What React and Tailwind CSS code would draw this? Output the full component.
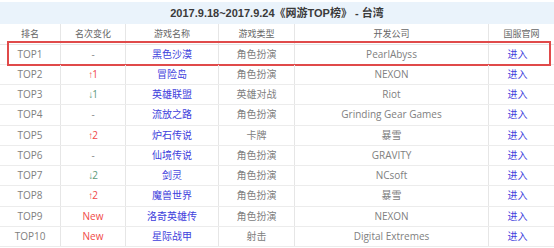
import React from "react";

const rows = [
  ["TOP1", "-", "黑色沙漠", "角色扮演", "PearlAbyss", "none"],
  ["TOP2", "↑1", "冒险岛", "角色扮演", "NEXON", "up"],
  ["TOP3", "↓1", "英雄联盟", "英雄对战", "Riot", "down"],
  ["TOP4", "-", "流放之路", "角色扮演", "Grinding Gear Games", "none"],
  ["TOP5", "↑2", "炉石传说", "卡牌", "暴雪", "up"],
  ["TOP6", "-", "仙境传说", "角色扮演", "GRAVITY", "none"],
  ["TOP7", "↓2", "剑灵", "角色扮演", "NCsoft", "down"],
  ["TOP8", "↑2", "魔兽世界", "角色扮演", "暴雪", "up"],
  ["TOP9", "New", "洛奇英雄传", "角色扮演", "NEXON", "new"],
  ["TOP10", "New", "星际战甲", "射击", "Digital Extremes", "new"],
];

const grid = "grid grid-cols-[61px_65px_93px_76px_194px_1fr]";
const font = { fontFamily: '"Open Sans", "Noto Sans CJK SC", sans-serif' };

function changeClass(t) {
  if (t === "up" || t === "new") return "text-[#f04848]";
  if (t === "down") return "text-[#5c9a7a]";
  return "text-[#888]";
}

function Change({ text, type }) {
  if (type === "up" || type === "down") {
    return (
      <span className="flex items-center">
        <span className="font-['Liberation_Sans'] text-[10px] tracking-[-1px]">{text[0]}</span>
        <span>{text.slice(1)}</span>
      </span>
    );
  }
  return <span>{text}</span>;
}

export default function App() {
  return (
    <div className="w-[554px] h-[248px] bg-white overflow-hidden" style={font}>
      <div className="pt-[2px]">
        <div className="h-[22px] bg-[#eaf3fb] flex items-center justify-center text-[11px] font-bold text-[#3a3a3a] font-['Liberation_Sans','Noto_Sans_CJK_SC',sans-serif]">
          2017.9.18~2017.9.24《网游TOP榜》 - 台湾
        </div>
      </div>
      <div className={`${grid} h-[20.5px] border-b border-[#e6e6e6] text-[9px] text-[#666]`}>
        {["排名", "名次变化", "游戏名称", "游戏类型", "开发公司", "国服官网"].map((h, i) => (
          <div key={h} className={`flex items-center justify-center ${i < 5 ? "border-r border-[#e6e6e6]" : ""}`}>{h}</div>
        ))}
      </div>
      {rows.map((r, idx) => (
        <div key={r[0]} className={`relative ${grid} h-[20.25px] border-b border-[#ececec] text-[10px] text-[#808080]`}>
          <div className="flex items-center justify-center border-r border-[#e6e6e6]">{r[0]}</div>
          <div className={`flex items-center justify-center border-r border-[#e6e6e6] ${changeClass(r[5])}`}>
            <Change text={r[1]} type={r[5]} />
          </div>
          <div className="flex items-center justify-center border-r border-[#e6e6e6] text-[#4040dc]">{r[2]}</div>
          <div className="flex items-center justify-center border-r border-[#e6e6e6]">{r[3]}</div>
          <div className="flex items-center justify-center border-r border-[#e6e6e6]">{r[4]}</div>
          <div className="flex items-center justify-center text-[#4040dc] pr-[8px]">进入</div>
          {idx === 0 && (
            <div className="absolute left-[7px] right-[3px] top-[-4px] bottom-[-2px] border-2 border-[#e04a4a]" />
          )}
        </div>
      ))}
    </div>
  );
}
